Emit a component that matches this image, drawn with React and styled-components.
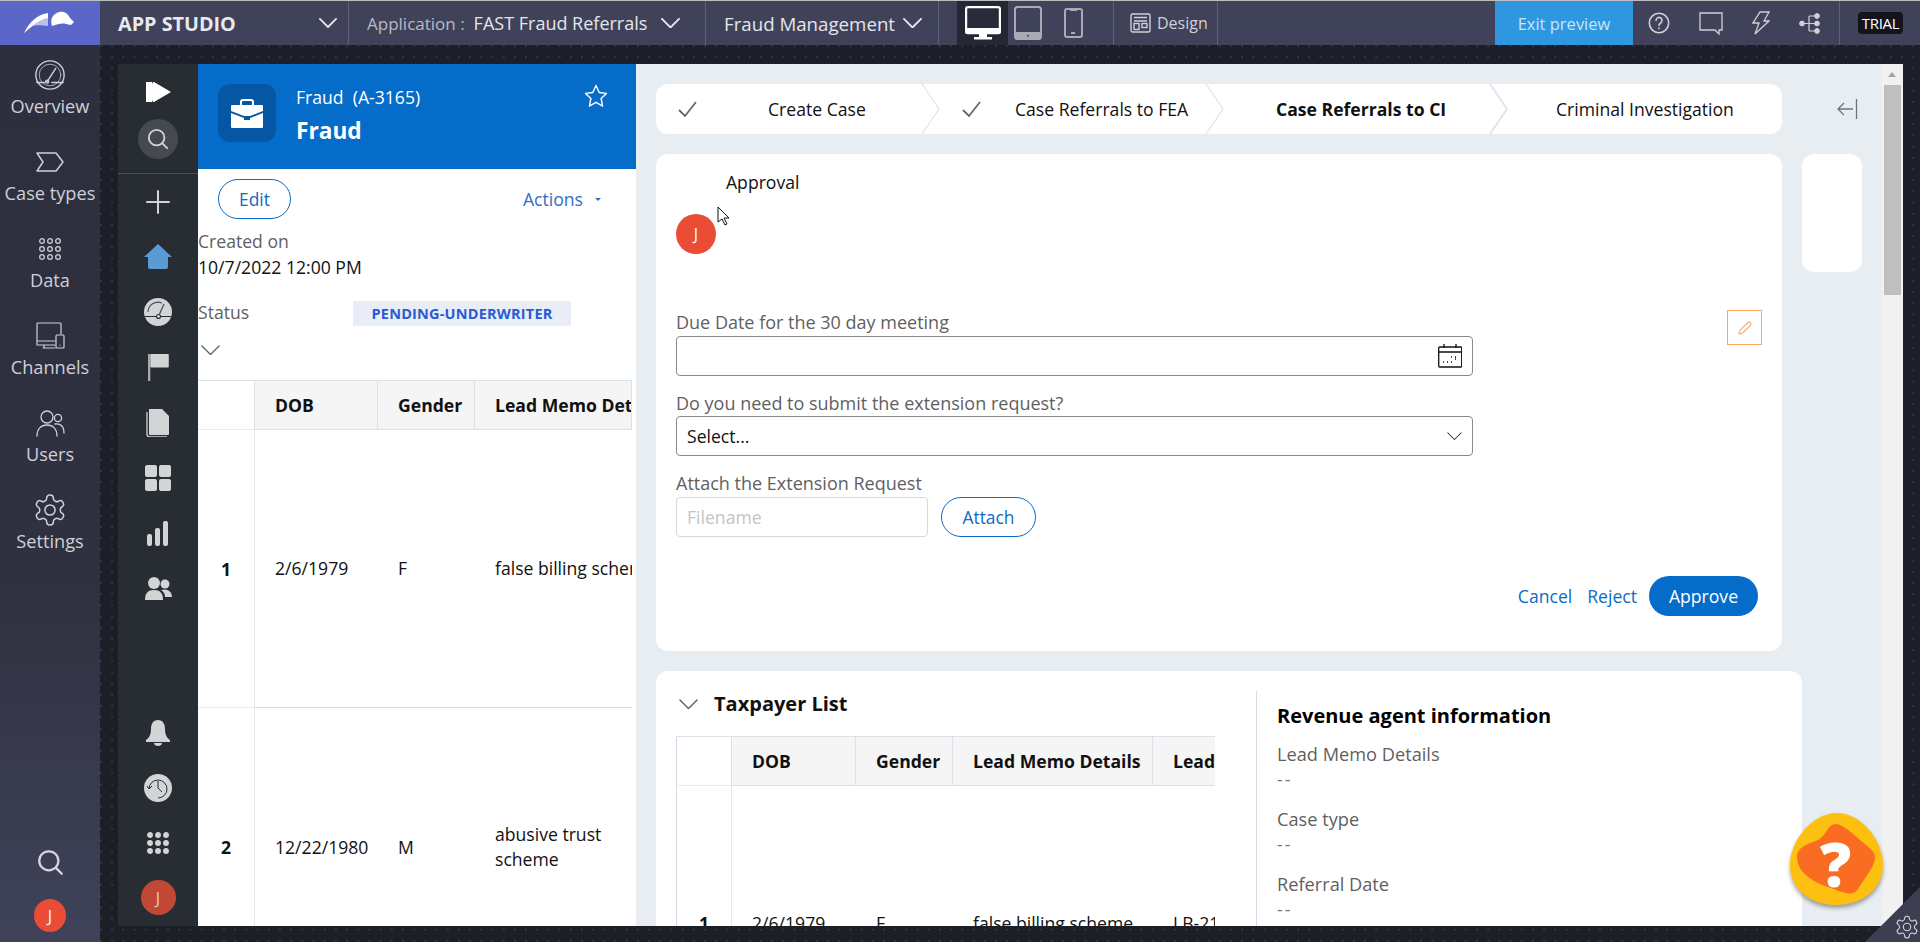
import React from 'react';
import styled, { createGlobalStyle } from 'styled-components';

const Global = createGlobalStyle`
  html, body { margin: 0; padding: 0; height: 100%; overflow: hidden; }
  body { font-family: "Open Sans", "Liberation Sans", sans-serif; font-size: 17.6px; color: #111; background: #1c1f28; }
  * { box-sizing: border-box; }
`;

const Shell = styled.div`
  position: relative; width: 1920px; height: 942px; display: grid;
  grid-template-columns: 100px 1fr; grid-template-rows: 45px 1fr; overflow: hidden;
`;
const TopBar = styled.header`
  grid-column: 1 / 3; display: flex; align-items: stretch; background: #40425a; border-top: 1px solid #bdbdbd; color: #e4e5ec;
`;
const LogoBox = styled.div`
  width: 100px; background: #5a67c9; display: flex; align-items: center; justify-content: center; flex: none;
`;
const BarCell = styled.div`
  display: flex; align-items: center; flex: none; width: ${p => p.$w}px; padding-left: ${p => p.$pl || 0}px;
  border-right: ${p => p.$noline ? 'none' : '1px solid #5f6176'}; border-left: ${p => p.$lead ? '1px solid #5f6176' : 'none'};
  font-size: ${p => p.$fs || 18}px; gap: ${p => p.$gap || 8}px; position: relative; white-space: nowrap;
`;
const StudioTitle = styled.span`font-weight: 700; font-size: 19.8px; color: #e8e9ef; flex: 1;`;
const StudioChevron = styled.span`display: flex; margin-right: 11px;`;
const AppLabel = styled.span`color: #b7b9c6; font-size: 17px; margin-right: -5px;`;
const Device = styled.div`
  width: ${p => p.$w}px; display: flex; align-items: center; justify-content: center; background: ${p => p.$on ? '#252734' : 'transparent'}; flex: none;
`;
const DesignLabel = styled.span`font-size: 16px; color: #cfd0d9;`;
const Exit = styled.div`
  width: 138px; margin-left: auto; background: #2f97e0; color: #c7e5fa; display: flex; align-items: center; justify-content: center; font-size: 16.500px; flex: none;
`;
const Tools = styled.div`display: flex; align-items: center; width: 207px; padding-left: 15px; gap: 29px; border-right: 1px solid #5f6176; flex: none; color: #cfd0d9;`;
const TrialWrap = styled.div`width: 80px; flex: none; display: flex; align-items: center; padding-left: 18px;`;
const Trial = styled.span`background: #14151c; color: #fff; border-radius: 4px; width: 45px; text-align: center; height: 22px; line-height: 22px; font-size: 15px; letter-spacing: -.3px;`;

const Nav = styled.nav`
  background: linear-gradient(180deg, #2d2f3e 0%, #2f3140 60%, #404259 100%); display: flex; flex-direction: column; align-items: center; padding-top: 11px; color: #d6d7de;
`;
const NavItem = styled.div`
  height: 87px; width: 100%; display: flex; flex-direction: column; align-items: center; color: #cfd0d8; font-size: 18.200px; white-space: nowrap; flex: none;
`;
const NavIcon = styled.div`height: 38px; display: flex; align-items: center; justify-content: center; flex: none;`;
const NavLabel = styled.span`line-height: 24px;`;
const NavBottom = styled.div`margin-top: auto; display: flex; flex-direction: column; align-items: center; gap: 23px; padding-bottom: 10px;`;
const Avatar = styled.div`
  width: ${p => p.$w}px; height: ${p => p.$h}px; border-radius: 50%; background: ${p => p.$bg || '#ea4c36'}; color: ${p => p.$fg || '#fff'}; display: flex; align-items: center; justify-content: center; font-size: 16px; flex: none;
`;
const RailAvatar = styled(Avatar)`margin-top: 9px;`;

const Canvas = styled.main`
  padding: 19px 17px 16px 18px; display: flex; min-height: 0;
  background-color: #1c1f28;
  background-image: radial-gradient(circle at 1px 1px, #343844 1px, transparent 1.2px);
  background-size: 11.2px 11.2px;
`;
const Preview = styled.div`flex: 1; display: flex; min-width: 0; overflow: hidden; background: #e8edf1;`;
const Rail = styled.aside`
  width: 80px; background: #272d33; display: flex; flex-direction: column; align-items: center; flex: none; color: #d3d4d6;
`;
const RailTop = styled.div`
  width: 100%; height: 110px; border-bottom: 1px solid #4a4f54; display: flex; flex-direction: column; align-items: center; padding-top: 18px; gap: 17px; flex: none;
`;
const RailSearch = styled.div`width: 40px; height: 40px; border-radius: 50%; background: #444a4f; display: flex; align-items: center; justify-content: center;`;
const RailIcon = styled.div`height: 55.3px; width: 100%; display: flex; align-items: center; justify-content: center; flex: none;`;
const RailBottom = styled.div`margin-top: auto; display: flex; flex-direction: column; align-items: center; padding-bottom: 11px; width: 100%;`;

const Panel = styled.section`
  width: 438px; background: #fff; flex: none; overflow: hidden; display: flex; flex-direction: column;
  & > * { flex: none; }
`;
const PanelHead = styled.div`height: 105px; background: #066cc9; padding: 20px 28px 20px 20px; display: flex; color: #fff; gap: 20px;`;
const CaseIcon = styled.div`width: 58px; height: 58px; border-radius: 12px; background: #0556a3; display: flex; align-items: center; justify-content: center; flex: none;`;
const HeadText = styled.div`display: flex; flex-direction: column; flex: 1;`;
const CaseId = styled.div`line-height: 27px; white-space: pre;`;
const CaseTitle = styled.div`font-size: 22.700px; font-weight: 700; line-height: 39px;`;
const Star = styled.div`flex: none;`;
const ActionRow = styled.div`display: flex; align-items: center; justify-content: space-between; padding: 10px 35px 9px 20px;`;
const PillButton = styled.button`
  height: ${p => p.$h}px; width: ${p => p.$w}px; border: 1px solid #0b6bc6; border-radius: 20px; background: #fff; color: #0b6bc6; font: 17.4px "Open Sans", sans-serif; padding: 0; flex: none;
`;
const ActionsLink = styled.span`color: #2a6fc9; display: flex; align-items: center; gap: 12px;`;
const Caret = styled.i`width: 0; height: 0; border: 3.5px solid transparent; border-top-color: #2a6fc9; border-bottom: 0;`;
const MetaLabel = styled.div`color: #5f5f5f; line-height: 26px;`;
const MetaValue = styled.div`color: #111; line-height: 26px;`;
const StatusRow = styled.div`display: flex; align-items: center; height: 25px; margin-top: 21px; color: #5f5f5f;`;
const StatusKey = styled.span`width: 155px; padding-bottom: 3px;`;
const Badge = styled.span`width: 218px; height: 25px; background: #e9edf8; color: #2a5bd0; font-weight: 700; font-size: 14.500px; display: flex; align-items: center; justify-content: center; letter-spacing: .2px;`;
const ChevronRow = styled.div`height: 54px; padding: 10px 0 0 3px;`;

const TableClip = styled.div`width: ${p => p.$w}px; overflow: hidden; flex: none;`;
const DataTable = styled.table`
  border-collapse: separate; border-spacing: 0; table-layout: fixed; width: ${p => p.$w}px;
`;
const HeadCell = styled.th`
  height: 50px; width: ${p => p.$w}px; background: ${p => p.$blank ? '#fff' : '#f5f5f6'}; text-align: left; padding: 0 0 0 ${p => p.$pl ?? 20}px; font-weight: 700; font-size: 17.600px; color: #111;
  border-top: 1.5px solid #dbe1e8; border-bottom: 1.5px solid ${p => p.$blank ? '#e8ecf0' : '#dbe1e8'}; border-right: 1px solid #dbe1e8; white-space: nowrap; overflow: hidden;
  border-left: ${p => p.$frame ? '1.5px solid #d2d9e1' : 'none'};
`;
const RowKey = styled.td`
  text-align: center; font-weight: 700; height: ${p => p.$h}px; border-right: 1px solid #e5e9ed; border-bottom: ${p => p.$line ? '1px solid #e5e9ed' : 'none'}; padding: ${p => p.$pt || 0}px 0 0; vertical-align: ${p => p.$v || 'middle'};
  border-left: ${p => p.$frame ? '1.5px solid #d2d9e1' : 'none'};
`;
const Cell = styled.td`
  padding: ${p => p.$pt || 0}px 8px 0 20px; line-height: 25px; color: #111; border-bottom: ${p => p.$line ? '1.5px solid #d6dde6' : 'none'}; vertical-align: ${p => p.$v || 'middle'}; white-space: ${p => p.$wrap ? 'normal' : 'nowrap'}; overflow: hidden;
`;

const Content = styled.div`flex: 1; min-width: 0; padding: 20px; display: flex; flex-direction: column; gap: 20px; overflow: hidden; position: relative;`;
const StageRow = styled.div`display: flex; align-items: center; height: 50px; flex: none; gap: 55px;`;
const Stage = styled.div`width: 1126px; height: 50px; background: #fff; border-radius: 12px; display: flex; flex: none;`;
const Step = styled.div`
  position: relative; width: ${p => p.$w}px; flex: none; display: flex; align-items: center; padding-left: ${p => p.$pad}px; font-weight: ${p => p.$bold ? 700 : 400}; color: #111; white-space: nowrap;
`;
const StepLabel = styled.span`margin-left: ${p => p.$gap}px;`;
const StepTip = styled.svg`position: absolute; top: 0; right: -18px; z-index: 1; overflow: visible;`;
const CardRow = styled.div`display: flex; gap: 20px; flex: none; align-items: flex-start;`;
const Card = styled.div`background: #fff; border-radius: 12px; position: relative; flex: none;`;
const FormCard = styled(Card)`width: 1126px; height: 497px; padding: 17px 24px 36px 20px; display: flex; flex-direction: column;`;
const SideCard = styled(Card)`width: 60px; height: 118px;`;
const ApprovalTitle = styled.div`padding-left: 50px; line-height: 22px; color: #111;`;
const FormAvatar = styled(Avatar)`margin-top: 21px;`;
const FieldLabel = styled.label`display: block; line-height: 22px; font-size: 18px; color: #5f5f5f; margin: ${p => p.$mt}px 0 ${p => p.$mb ?? 2}px;`;
const Field = styled.div`
  width: 797px; height: 40px; border: 1px solid #8b8b8b; border-radius: 4px; display: flex; align-items: center; justify-content: space-between; padding: 0 10px; flex: none; color: #111;
`;
const AttachRow = styled.div`display: flex; gap: 13px; flex: none;`;
const FileBox = styled.div`width: 252px; height: 40px; border: 1px solid #d8d8d8; border-radius: 4px; padding-left: 10px; display: flex; align-items: center; color: #c4c4c4;`;
const Footer = styled.div`margin-top: 39px; display: flex; justify-content: flex-end; align-items: center; gap: 15px;`;
const LinkBtn = styled.span`color: #0b6bc6;`;
const Approve = styled.button`width: 109px; height: 40px; border: none; border-radius: 20px; background: #066cc9; color: #fff; font: 17.6px "Open Sans", sans-serif; margin-left: -3px;`;
const PencilBox = styled.div`position: absolute; top: 156px; right: 20px; width: 35px; height: 35px; border: 1px solid #f7a866; display: flex; align-items: center; justify-content: center; color: #f7a866;`;
const Cursor = styled.svg`position: absolute; left: 61px; top: 52px; z-index: 2;`;

const TaxCard = styled(Card)`width: 1146px; height: 255px; padding: 20px 0 0 20px; display: flex; border-radius: 12px 12px 0 0;`;
const TaxLeft = styled.div`width: 580px; display: flex; flex-direction: column; flex: none;`;
const TaxTitle = styled.h2`margin: 0 0 19px; font-size: 20px; font-weight: 700; line-height: 26px; color: #111; display: flex; align-items: center; gap: 16px; padding-left: 3px;`;
const TaxRight = styled.div`border-left: 1px solid #d8dde3; padding: 12px 0 0 20px; flex: 1; height: 300px;`;
const InfoTitle = styled.h3`margin: 0 0 13px; font-size: 20px; font-weight: 700; line-height: 26px; color: #000;`;
const InfoLabel = styled.div`color: #5f5f5f; line-height: 24px; font-size: 18.200px;`;
const InfoValue = styled.div`color: #777; line-height: 24px; letter-spacing: 2px; margin-bottom: ${p => p.$mb}px; margin-top: 1px;`;
const ScrollBar = styled.div`width: 21px; background: #f1f1f1; flex: none; padding: 21px 2px 0; display: flex; flex-direction: column; position: relative;`;
const ScrollArrow = styled.i`position: absolute; top: 8px; left: 6px; width: 0; height: 0; border: 4.5px solid transparent; border-bottom: 5px solid #a3a3a3; border-top: 0;`;
const ScrollThumb = styled.div`height: 210px; background: #bfbfbf;`;

const HelpBlob = styled.div`position: absolute; left: 1790px; top: 813px; width: 94px; height: 94px; z-index: 3; filter: drop-shadow(0 3px 2px rgba(0,0,0,.35));`;
const HelpMark = styled.span`position: absolute; left: 30px; top: 20px; font: 800 62px/60px "Open Sans", sans-serif; color: #fff;`;
const CornerGear = styled.div`
  position: absolute; right: 0; bottom: 0; width: 55px; height: 55px; z-index: 4; background: #3c3e52; clip-path: polygon(100% 0, 100% 100%, 0 100%); display: flex; align-items: flex-end; justify-content: flex-end; padding: 0 0 2px 0; color: #d6d7de;
`;
const CollapseIcon = styled.div`flex: none; color: #6d7680; display: flex;`;

const S = ({ w = 24, h = 24, vb = '0 0 24 24', sw = 1.4, children, fill = 'none' }) => (
  <svg width={w} height={h} viewBox={vb} fill={fill} stroke={fill === 'none' ? 'currentColor' : 'none'} strokeWidth={sw} strokeLinecap="round" strokeLinejoin="round">{children}</svg>
);
const Chevron = ({ w = 19, color = 'currentColor', sw = 1.6 }) => (
  <svg width={w} height={w * 0.55} viewBox="0 0 20 11" fill="none" stroke={color} strokeWidth={sw} strokeLinecap="round" strokeLinejoin="round"><path d="M1 1l9 9 9-9" /></svg>
);
const Logo = () => (
  <svg width="52" height="24" viewBox="0 0 52 24">
    <path d="M0 22C5 12 12 4 24 2V8C17 9 9 14 0 22Z" fill="#fff" />
    <path d="M8 15C13 11 18 8 24 7V15C18 14 12 14 8 15Z" fill="#b9c0ea" />
    <path d="M28 15C26 9 28 3 35 1 41 0 44 3 46 7L50 11 47 14 42 13C38 12 34 13 28 15Z" fill="#fff" />
  </svg>
);
const Gauge = ({ s = 34 }) => (
  <S w={s} h={s} vb="0 0 34 34" sw={1.5}><circle cx="17" cy="17" r="15" /><circle cx="17" cy="17" r="11.5" strokeWidth="0.8" /><path d="M14 24l9-14" /><circle cx="14" cy="24" r="1.6" /><path d="M3 25h8M19 25h12" /></S>
);
const CaseTypes = () => <S w={30} h={24} vb="0 0 30 24" sw={1.5}><path d="M2 3h19l7 9-7 9H2l6-9z" /></S>;
const Dots = ({ filled }) => (
  <svg width="22" height="22" viewBox="0 0 22 22">
    {[3, 11, 19].flatMap(y => [3, 11, 19].map(x => (
      <circle key={`${x}-${y}`} cx={x} cy={y} r="2.3" fill={filled ? 'currentColor' : 'none'} stroke="currentColor" strokeWidth="1.3" />
    )))}
  </svg>
);
const Channels = () => <S w={30} h={30} vb="0 0 30 30" sw={1.2}><path d="M20 20H2V3a1 1 0 011-1h22a1 1 0 011 1v10M2 20v4h18M9 24v3h8M8 27h12" /><rect x="21" y="14" width="8" height="13" rx="1" /><path d="M25 24h.01" /></S>;
const Users = () => <S w={30} h={30} vb="0 0 30 30" sw={1.3}><circle cx="12" cy="9" r="6" /><circle cx="23" cy="10" r="3.6" /><path d="M2 28c0-7 4-11 10-11s10 4 10 11M20 16c5-1 9 2 9 9" /></S>;
const Gear = ({ s = 30 }) => (
  <S w={s} h={s} vb="0 0 24 24" sw={1}><path d="M12.22 2h-.44a2 2 0 0 0-2 2v.18a2 2 0 0 1-1 1.73l-.43.25a2 2 0 0 1-2 0l-.15-.08a2 2 0 0 0-2.73.73l-.22.38a2 2 0 0 0 .73 2.73l.15.1a2 2 0 0 1 1 1.72v.51a2 2 0 0 1-1 1.74l-.15.09a2 2 0 0 0-.73 2.73l.22.38a2 2 0 0 0 2.73.73l.15-.08a2 2 0 0 1 2 0l.43.25a2 2 0 0 1 1 1.73V20a2 2 0 0 0 2 2h.44a2 2 0 0 0 2-2v-.18a2 2 0 0 1 1-1.73l.43-.25a2 2 0 0 1 2 0l.15.08a2 2 0 0 0 2.73-.73l.22-.39a2 2 0 0 0-.73-2.73l-.15-.08a2 2 0 0 1-1-1.74v-.5a2 2 0 0 1 1-1.74l.15-.09a2 2 0 0 0 .73-2.73l-.22-.38a2 2 0 0 0-2.73-.73l-.15.08a2 2 0 0 1-2 0l-.43-.25a2 2 0 0 1-1-1.73V4a2 2 0 0 0-2-2z" /><circle cx="12" cy="12" r="3.4" /></S>
);
const Lens = ({ s = 27 }) => <S w={s} h={s} vb="0 0 24 24" sw={2}><circle cx="10.5" cy="10.5" r="8.5" /><path d="M17 17l5 5" /></S>;

const navItems = [
  ['Overview', <Gauge key="a" s={32} />], ['Case types', <CaseTypes key="b" />], ['Data', <Dots key="c" />],
  ['Channels', <Channels key="d" />], ['Users', <Users key="e" />], ['Settings', <Gear key="f" s={36} />],
];
const steps = [
  { label: 'Create Case', done: true, w: 266, pad: 22, gap: 71 },
  { label: 'Case Referrals to FEA', done: true, w: 284, pad: 40, gap: 34 },
  { label: 'Case Referrals to CI', w: 284, pad: 70, gap: 0, bold: true, shadow: true },
  { label: 'Criminal Investigation', w: 292, pad: 66, gap: 0, last: true },
];
const Check = () => <svg width="19" height="17" viewBox="0 0 19 17" fill="none" stroke="#5f6872" strokeWidth="1.8"><path d="M1 9l6 6L18 1" /></svg>;

const railIcons = [
  <S key="1" w={24} h={24} sw={2}><path d="M12 1v22M1 12h22" /></S>,
  <svg key="2" width="28" height="25" viewBox="0 0 28 25"><path d="M14 0L28 13h-4v10a2 2 0 01-2 2H6a2 2 0 01-2-2V13H0z" fill="#5b9bd5" /></svg>,
  <svg key="3" width="28" height="28" viewBox="0 0 28 28"><circle cx="14" cy="14" r="14" fill="currentColor" /><path d="M4 14A10 10 0 0 1 18 5" fill="none" stroke="#4d5257" strokeWidth="1.2" /><path d="M14.500 18.500L20 6" stroke="#4d5257" strokeWidth="1.300" /><path d="M0.500 18.500h12M16.500 18.500h11" stroke="#272d33" strokeWidth="1.200" /><circle cx="14.500" cy="18.500" r="2" fill="currentColor" stroke="#272d33" strokeWidth="1.100" /></svg>,
  <svg key="4" width="21" height="27" viewBox="0 0 21 27"><rect x="0" y="0" width="2.300" height="27" fill="#a7a9ab" /><rect x="2.300" y="0" width="18.500" height="13.500" rx="1" fill="currentColor" /></svg>,
  <svg key="5" width="24" height="28" viewBox="0 0 24 28"><path d="M3 0h13l7 7v18a1 1 0 01-1 1H4a1 1 0 01-1-1z" fill="currentColor" /><path d="M1 3v22a3 3 0 003 3h17" stroke="currentColor" fill="none" strokeWidth="1.3" /></svg>,
  <svg key="6" width="26" height="26" viewBox="0 0 26 26" fill="currentColor"><rect width="12" height="12" rx="2" /><rect x="14" width="12" height="12" rx="2" /><rect y="14" width="12" height="12" rx="2" /><rect x="14" y="14" width="12" height="12" rx="2" /></svg>,
  <svg key="7" width="22" height="25" viewBox="0 0 22 25" fill="currentColor"><rect y="13" width="5" height="12" rx="2" /><rect x="8" y="7" width="5" height="18" rx="2" /><rect x="16" width="5" height="25" rx="2" /></svg>,
  <svg key="8" width="27" height="23" viewBox="0 0 27 23" fill="currentColor"><circle cx="9" cy="6" r="6" /><path d="M0 23c0-7 3-10 9-10s9 3 9 10z" /><circle cx="20" cy="7" r="4.5" /><path d="M16 13c6-2 11 1 11 7h-7c0-3-1-5-4-7z" /></svg>,
];

const leftRows = [
  { n: 1, dob: '2/6/1979', g: 'F', memo: 'false billing scheme', h: 278, line: true },
  { n: 2, dob: '12/22/1980', g: 'M', memo: 'abusive trust scheme', h: 278, wrap: true },
];

export default function App() {
  return (
    <Shell>
      <Global />
      <TopBar>
        <LogoBox><Logo /></LogoBox>
        <BarCell $w={249} $pl={18}>
          <StudioTitle>APP STUDIO</StudioTitle>
          <StudioChevron><Chevron w={18} sw={2} /></StudioChevron>
        </BarCell>
        <BarCell $w={357} $pl={18} $gap={14}>
          <AppLabel>Application :</AppLabel>
          <span>FAST Fraud Referrals</span>
          <Chevron w={19} sw={2} />
        </BarCell>
        <BarCell $w={233} $pl={18} $fs={18.700}>
          <span>Fraud Management</span>
          <Chevron w={19} sw={2} />
        </BarCell>
        <Device $w={18} />
        <Device $w={51} $on>
          <svg width="36" height="34" viewBox="0 0 36 34"><rect x="1.1" y="1.1" width="33.800" height="26" rx="2" fill="#292b38" stroke="#fff" strokeWidth="2.2" /><path d="M0 22h36v4a2 2 0 01-2 2H2a2 2 0 01-2-2z" fill="#fff" /><path d="M14 28h8v3h-8zM9 31h18v2.500H9z" fill="#fff" /></svg>
        </Device>
        <Device $w={40}>
          <svg width="28" height="34" viewBox="0 0 28 34"><rect x="1" y="1" width="26" height="32" rx="2.5" fill="#40425a" stroke="#a9aab4" strokeWidth="2" /><path d="M1 26h26v5a2 2 0 01-2 2H3a2 2 0 01-2-2z" fill="#a9aab4" /><rect x="13" y="29" width="2" height="1.5" fill="#40425a" /></svg>
        </Device>
        <Device $w={50}>
          <svg width="19" height="30" viewBox="0 0 19 30" fill="none" stroke="#a9aab4" strokeWidth="2"><rect x="1" y="1" width="17" height="28" rx="2" /><path d="M6 2h7M7 25h4" /></svg>
        </Device>
        <Device $w={15} />
        <BarCell $w={105} $pl={16} $lead $fs={16} $gap={6}>
          <svg width="21" height="20" viewBox="0 0 21 20" fill="none" stroke="#cfd0d9" strokeWidth="1.4"><rect x="1" y="1" width="19" height="18" rx="1.5" /><path d="M4 4.5h13M4 8h13" /><rect x="4" y="10.5" width="5" height="6" /><rect x="12" y="10.5" width="5" height="4" /></svg>
          <DesignLabel>Design</DesignLabel>
        </BarCell>
        <Exit>Exit preview</Exit>
        <Tools>
          <svg width="22" height="22" viewBox="0 0 22 22" fill="none" stroke="currentColor" strokeWidth="1.6"><circle cx="11" cy="11" r="9.7" /><path d="M8 8.5a3 3 0 114.6 2.5c-1 .7-1.6 1.2-1.6 2.5M11 16v.6" strokeLinecap="round" /></svg>
          <svg width="24" height="23" viewBox="0 0 24 23" fill="none" stroke="currentColor" strokeWidth="1.3"><path d="M1 1h22v17h-3v4l-4-4H1z" /></svg>
          <svg width="18" height="24" viewBox="0 0 18 24" fill="none" stroke="currentColor" strokeWidth="1.3"><path d="M8 1h9l-5 9h5L3 23l4-11H1z" /></svg>
          <svg width="21" height="21" viewBox="0 0 21 21" fill="currentColor" stroke="currentColor"><circle cx="3" cy="10.5" r="2.4" /><circle cx="18" cy="3" r="2.4" /><circle cx="18" cy="10.5" r="2.4" /><circle cx="18" cy="18" r="2.4" /><path d="M3 10.5h15M10 3h8M10 18h8M10 3v15" fill="none" strokeWidth="1.2" /></svg>
        </Tools>
        <TrialWrap><Trial>TRIAL</Trial></TrialWrap>
      </TopBar>

      <Nav>
        {navItems.map(([label, icon]) => (
          <NavItem key={label}><NavIcon>{icon}</NavIcon><NavLabel>{label}</NavLabel></NavItem>
        ))}
        <NavBottom>
          <Lens />
          <Avatar $w={32} $h={33}>J</Avatar>
        </NavBottom>
      </Nav>

      <Canvas>
        <Preview>
          <Rail>
            <RailTop>
              <svg width="25" height="20" viewBox="0 0 25 20" fill="#fff"><path d="M0 0h6v2l1-2h1L25 10 8 20H7l-1-2v2H0z" /></svg>
              <RailSearch><Lens s={22} /></RailSearch>
            </RailTop>
            {railIcons.map((icon, i) => <RailIcon key={i}>{icon}</RailIcon>)}
            <RailBottom>
              <RailIcon><svg width="24" height="26" viewBox="0 0 24 26" fill="currentColor"><path d="M12 0c5 0 7 4 7 9 0 6 2 9 5 11v2H0v-2c3-2 5-5 5-11 0-5 2-9 7-9z" /><path d="M8 23h8c0 2-2 3-4 3s-4-1-4-3z" /></svg></RailIcon>
              <RailIcon><svg width="28" height="28" viewBox="0 0 28 28"><circle cx="14" cy="14" r="14" fill="currentColor" /><path d="M5 15a9 9 0 119 9M3 12l2 3 3-3M14 7v7l4 4" fill="none" stroke="#272d33" strokeWidth="1" /></svg></RailIcon>
              <RailIcon><Dots filled /></RailIcon>
              <RailAvatar $w={35} $h={35} $bg="#c24836" $fg="#e8c9c3">J</RailAvatar>
            </RailBottom>
          </Rail>

          <Panel>
            <PanelHead>
              <CaseIcon>
                <svg width="32" height="29" viewBox="0 0 32 29"><path d="M10 6V3a2 2 0 012-2h8a2 2 0 012 2v3" fill="none" stroke="#fff" strokeWidth="2" /><path d="M0 7a1 1 0 011-1h30a1 1 0 011 1v5l-13 5h-6L0 12z" fill="#fff" /><path d="M0 14l13 5v2h6v-2l13-5v14a1 1 0 01-1 1H1a1 1 0 01-1-1z" fill="#fff" /><rect x="14" y="17" width="4" height="3" fill="#0556a3" /></svg>
              </CaseIcon>
              <HeadText>
                <CaseId>Fraud  (A-3165)</CaseId>
                <CaseTitle>Fraud</CaseTitle>
              </HeadText>
              <Star>
                <svg width="24" height="24" viewBox="0 0 24 24" fill="none" stroke="#fff" strokeWidth="1.4" strokeLinejoin="round"><path d="M12 1.5l3.2 7 7.3.9-5.4 5.1 1.5 7.6L12 18.3l-6.6 3.8 1.5-7.6L1.500 9.400l7.300-.9z" /></svg>
              </Star>
            </PanelHead>
            <ActionRow>
              <PillButton $w={73} $h={40}>Edit</PillButton>
              <ActionsLink>Actions <Caret /></ActionsLink>
            </ActionRow>
            <MetaLabel>Created on</MetaLabel>
            <MetaValue>10/7/2022 12:00 PM</MetaValue>
            <StatusRow><StatusKey>Status</StatusKey><Badge>PENDING-UNDERWRITER</Badge></StatusRow>
            <ChevronRow><Chevron w={19} color="#5a6370" sw={1.4} /></ChevronRow>
            <TableClip $w={434}>
              <DataTable $w={434}>
                <thead>
                  <tr>
                    <HeadCell $blank $w={57} />
                    <HeadCell $w={123}>DOB</HeadCell>
                    <HeadCell $w={97}>Gender</HeadCell>
                    <HeadCell $w={157}>Lead Memo Details</HeadCell>
                  </tr>
                </thead>
                <tbody>
                  {leftRows.map(r => (
                    <tr key={r.n}>
                      <RowKey $h={r.h} $line={r.line}>{r.n}</RowKey>
                      <Cell $line={r.line}>{r.dob}</Cell>
                      <Cell $line={r.line}>{r.g}</Cell>
                      <Cell $line={r.line} $wrap={r.wrap}>{r.memo}</Cell>
                    </tr>
                  ))}
                </tbody>
              </DataTable>
            </TableClip>
          </Panel>

          <Content>
            <StageRow>
              <Stage>
                {steps.map(s => (
                  <Step key={s.label} $w={s.w} $pad={s.pad} $bold={s.bold}>
                    {s.done && <Check />}
                    <StepLabel $gap={s.gap}>{s.label}</StepLabel>
                    {!s.last && (
                      <StepTip width="18" height="50" viewBox="0 0 18 50" fill="#fff" stroke={s.shadow ? '#e2e5e9' : '#d5dbe3'} strokeWidth={s.shadow ? 2 : 1}>
                        <path d="M0 0l17 25L0 50" />
                      </StepTip>
                    )}
                  </Step>
                ))}
              </Stage>
              <CollapseIcon>
                <svg width="21" height="20" viewBox="0 0 21 20" fill="none" stroke="currentColor" strokeWidth="1.3"><path d="M19.500 0v20M16 10H1M7 4l-6 6 6 6" /></svg>
              </CollapseIcon>
            </StageRow>
            <CardRow>
              <FormCard>
                <ApprovalTitle>Approval</ApprovalTitle>
                <FormAvatar $w={40} $h={40}>J</FormAvatar>
                <Cursor width="13" height="20" viewBox="0 0 13 20" fill="#fff" stroke="#111" strokeWidth="1"><path d="M1 1v15l4-3 3 6 2-1-3-6h5z" /></Cursor>
                <FieldLabel $mt={57} $mb={3}>Due Date for the 30 day meeting</FieldLabel>
                <Field>
                  <span />
                  <svg width="24" height="24" viewBox="0 0 24 24" fill="none" stroke="#111" strokeWidth="1.3"><rect x="0.700" y="3" width="23" height="20" rx="1" /><path d="M1 8h22M6 0v4M18 0v4" /><path d="M13 13h1M17 13h1M5 18h1M9 18h1M13 18h1M17 15h1" strokeWidth="1.6" /></svg>
                </Field>
                <FieldLabel $mt={16}>Do you need to submit the extension request?</FieldLabel>
                <Field>
                  <span>Select...</span>
                  <Chevron w={15} color="#333" sw={1.4} />
                </Field>
                <FieldLabel $mt={16} $mb={3}>Attach the Extension Request</FieldLabel>
                <AttachRow>
                  <FileBox>Filename</FileBox>
                  <PillButton $w={95} $h={40}>Attach</PillButton>
                </AttachRow>
                <Footer>
                  <LinkBtn>Cancel</LinkBtn>
                  <LinkBtn>Reject</LinkBtn>
                  <Approve>Approve</Approve>
                </Footer>
                <PencilBox>
                  <svg width="16" height="16" viewBox="0 0 24 24" fill="none" stroke="currentColor" strokeWidth="1.6" strokeLinejoin="round"><path d="M3 21l1.500-5.500L16 4a2.800 2.800 0 014 4L8.500 19.500z" /></svg>
                </PencilBox>
              </FormCard>
              <SideCard />
            </CardRow>
            <TaxCard>
              <TaxLeft>
                <TaxTitle><Chevron w={19} color="#5a6370" sw={1.5} />Taxpayer List</TaxTitle>
                <TableClip $w={539}>
                  <DataTable $w={660}>
                    <thead>
                      <tr>
                        <HeadCell $blank $frame $w={56} />
                        <HeadCell $w={124}>DOB</HeadCell>
                        <HeadCell $w={97}>Gender</HeadCell>
                        <HeadCell $w={200}>Lead Memo Details</HeadCell>
                        <HeadCell $w={183}>Lead Source</HeadCell>
                      </tr>
                    </thead>
                    <tbody>
                      <tr>
                        <RowKey $h={170} $frame $v="top" $pt={125}>1</RowKey>
                        <Cell $v="top" $pt={125}>2/6/1979</Cell>
                        <Cell $v="top" $pt={125}>F</Cell>
                        <Cell $v="top" $pt={125}>false billing scheme</Cell>
                        <Cell $v="top" $pt={125}>LB-2104</Cell>
                      </tr>
                    </tbody>
                  </DataTable>
                </TableClip>
              </TaxLeft>
              <TaxRight>
                <InfoTitle>Revenue agent information</InfoTitle>
                <InfoLabel>Lead Memo Details</InfoLabel>
                <InfoValue $mb={16}>--</InfoValue>
                <InfoLabel>Case type</InfoLabel>
                <InfoValue $mb={16}>--</InfoValue>
                <InfoLabel>Referral Date</InfoLabel>
                <InfoValue $mb={0}>--</InfoValue>
              </TaxRight>
            </TaxCard>
          </Content>
          <ScrollBar><ScrollArrow /><ScrollThumb /></ScrollBar>
        </Preview>
      </Canvas>

      <HelpBlob>
        <svg width="94" height="94" viewBox="0 0 94 94">
          <path d="M47 0C72 0 93 28 93 52 93 76 72 92 46 92 20 92 0 76 0 52 0 28 22 0 47 0Z" fill="#fdc010" />
          <path d="M45 11C52 11 60 18 70 27 78 34 86 38 85 46 84 54 74 66 68 76 64 82 58 81 52 79 42 75 36 74 28 70 16 64 7 56 7 44 7 34 18 31 28 27 36 23 37 12 45 11Z" fill="#f96c22" />
        </svg>
        <HelpMark>?</HelpMark>
      </HelpBlob>
      <CornerGear><Gear s={26} /></CornerGear>
    </Shell>
  );
}
